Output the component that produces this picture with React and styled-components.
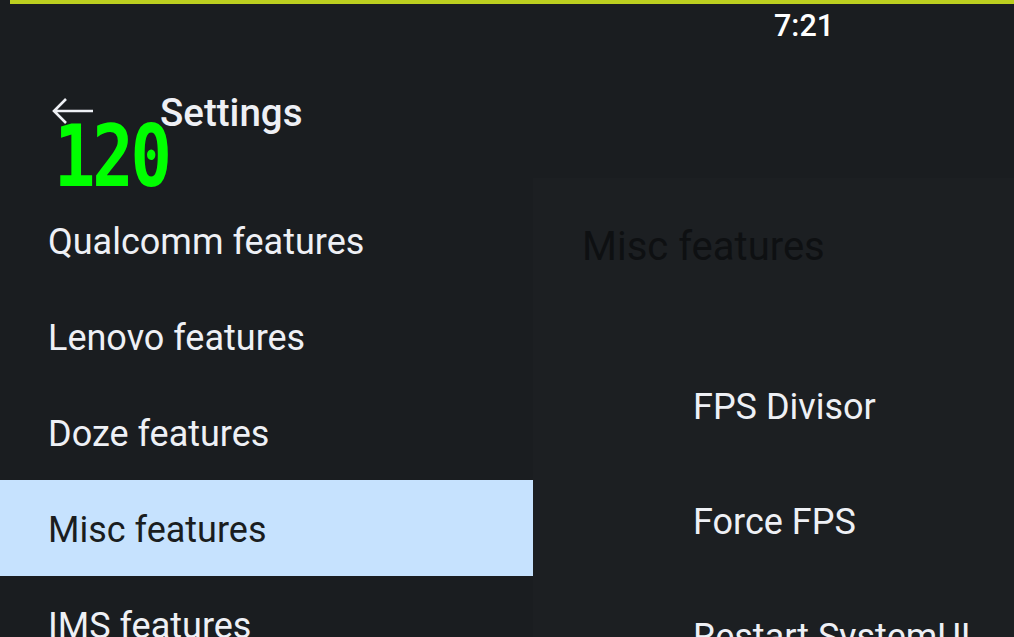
import React from "react";
import styled, { createGlobalStyle } from "styled-components";

const Global = createGlobalStyle`
  html, body { margin: 0; padding: 0; background: #1a1d20; }
  body { font-family: Roboto, "Noto Sans", sans-serif; }
`;

const Screen = styled.div`
  position: relative;
  width: 1014px;
  height: 637px;
  overflow: hidden;
  background: #1a1d20;
  display: flex;
  flex-direction: column;
`;

const TopLine = styled.div`
  height: 4px;
  margin-left: 10px;
  background: #bccf1f;
  flex: none;
`;

const StatusBar = styled.div`
  height: 42px;
  flex: none;
  display: flex;
  align-items: center;
  padding-left: 774px;
  color: #ffffff;
  font-size: 30.5px;
  font-weight: 500;
`;

const Header = styled.div`
  height: 130px;
  padding-bottom: 2px;
  flex: none;
  display: flex;
  align-items: center;
  padding-left: 51px;
  gap: 65px;
  color: #eef0f5;
`;

const Title = styled.div`
  font-size: 38.5px;
  font-weight: 500;
  line-height: 44px;
  margin-top: 4px;
`;

const Body = styled.div`
  flex: 1;
  display: flex;
  min-height: 0;
`;

const Nav = styled.div`
  width: 533px;
  flex: none;
  padding-top: 14px;
  display: flex;
  flex-direction: column;
`;

const NavItem = styled.div`
  height: 96px;
  box-sizing: border-box;
  padding-top: 3px;
  flex: none;
  display: flex;
  align-items: center;
  padding-left: 48px;
  font-size: 36px;
  color: ${(p) => (p.$active ? "#1a1d20" : "#eef0f5")};
  background: ${(p) => (p.$active ? "#c6e2fe" : "transparent")};
`;

const Panel = styled.div`
  flex: 1;
  background: #1c1f22;
  display: flex;
  flex-direction: column;
  padding-top: 45px;
`;

const PanelTitle = styled.div`
  padding-left: 49px;
  font-size: 40px;
  line-height: 48px;
  color: #0e1012;
  margin-bottom: 78px;
`;

const PanelItem = styled.div`
  height: 115px;
  flex: none;
  display: flex;
  align-items: center;
  padding-left: 160px;
  font-size: 36px;
  color: #eef0f5;
`;

const Fps = styled.div`
  position: absolute;
  left: 54px;
  top: 113px;
  font-family: "DejaVu Sans Mono", monospace;
  font-weight: bold;
  font-size: 86px;
  line-height: 86px;
  color: #00ff00;
  transform: scaleX(0.8);
  transform-origin: left top;
  letter-spacing: -4px;
`;

const BackArrow = () => (
  <svg width="44" height="30" viewBox="0 0 44 30" fill="none">
    <path d="M42 15H3M15 3L3 15L15 27" stroke="#eef0f5" strokeWidth="2.6" />
  </svg>
);

const navItems = [
  "Qualcomm features",
  "Lenovo features",
  "Doze features",
  "Misc features",
  "IMS features",
];

const panelItems = ["FPS Divisor", "Force FPS", "Restart SystemUI"];

export default function App() {
  return (
    <>
      <Global />
      <Screen>
        <TopLine />
        <StatusBar>7:21</StatusBar>
        <Header>
          <BackArrow />
          <Title>Settings</Title>
        </Header>
        <Body>
          <Nav>
            {navItems.map((t) => (
              <NavItem key={t} $active={t === "Misc features"}>
                {t}
              </NavItem>
            ))}
          </Nav>
          <Panel>
            <PanelTitle>Misc features</PanelTitle>
            {panelItems.map((t) => (
              <PanelItem key={t}>{t}</PanelItem>
            ))}
          </Panel>
        </Body>
        <Fps>120</Fps>
      </Screen>
    </>
  );
}
